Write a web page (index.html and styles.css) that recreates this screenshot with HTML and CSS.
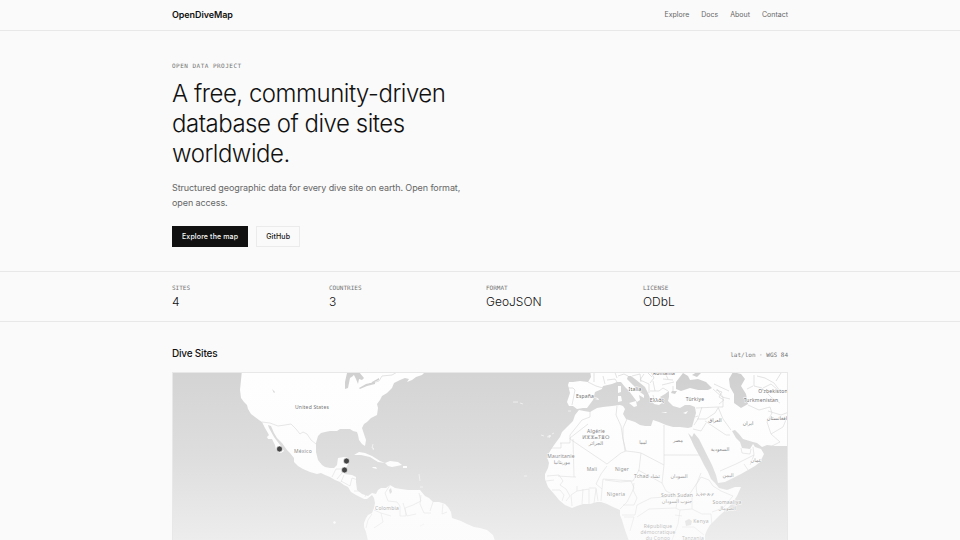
FILE: index.html
```html
<!DOCTYPE html>
<html lang="en">
<head>
<meta charset="utf-8">
<meta name="viewport" content="width=device-width, initial-scale=1">
<title>OpenDiveMap</title>
<link rel="stylesheet" href="styles.css">
</head>
<body>
<header class="site-header">
  <div class="container header-row">
    <a class="brand" href="#">OpenDiveMap</a>
    <nav class="nav">
      <a href="#map">Explore</a>
      <a href="#docs">Docs</a>
      <a href="#about">About</a>
      <a href="#contact">Contact</a>
    </nav>
  </div>
</header>
<main>
  <section class="container hero">
    <p class="eyebrow">Open data project</p>
    <h1>A free, community-driven database of dive sites worldwide.</h1>
    <p class="lead">Structured geographic data for every dive site on earth. Open format, open access.</p>
    <div class="actions">
      <a class="button button-primary" href="#map">Explore the map</a>
      <a class="button" href="#github">GitHub</a>
    </div>
  </section>
  <section class="stats">
    <dl class="container stats-grid">
      <div><dt>Sites</dt><dd>4</dd></div>
      <div><dt>Countries</dt><dd>3</dd></div>
      <div><dt>Format</dt><dd>GeoJSON</dd></div>
      <div><dt>License</dt><dd>ODbL</dd></div>
    </dl>
  </section>
  <section class="container sites" id="map">
    <div class="sites-head">
      <h2>Dive Sites</h2>
      <span class="meta">lat/lon · WGS 84</span>
    </div>
    <div class="map">
      <svg class="map-art" viewBox="173 373 614 167" role="img" aria-label="Map of dive sites">
        <defs>
          <linearGradient id="fade" x1="0" y1="0" x2="0" y2="1">
            <stop offset="0" stop-color="#fafafa" stop-opacity="0"/>
            <stop offset="0.5" stop-color="#fafafa" stop-opacity="0.25"/>
            <stop offset="1" stop-color="#fafafa" stop-opacity="0.66"/>
          </linearGradient>
        </defs>
        <rect class="sea" x="172" y="372" width="617" height="169"/>
        <!-- Americas -->
        <path class="land" d="M242 370L240 390 241 398 244 402 247 405 248 409 251 414 255 417 259 420 262 422 265 428 269 435 267 437 268 439 272 439 275 445 276 450 281 453 284 451 280 445 274 437 269 428 268 425 271 426 274 433 277 438 282 443 287 450 290 453 294 458 294 462 298 466 303 469 310 472 317 474 321 473 325 475 330 477 335 480 340 482 344 485 348 487 351 492 356 495 360 497 364 499 367 499 372 495 374 498 375 503 374 508 372 513 368 515 366 518 364 523 364 527 366 532 368 541H495L493 535 487 530 480 528 474 527 467 524 461 521 452 518 451 512 448 507 445 504 439 502 433 502 429 498 425 496 420 490 415 490 408 490 401 489 395 488 390 485 386 488 381 488 378 490 376 494 372 493 368 496 362 494 357 490 356 482 356 477 352 475 344 474 346 468 349 462 348 458 344 457 338 458 337 465 334 468 330 468 325 467 322 465 318 460 316 452 316 443 318 436 321 433 325 432 330 431 337 431 340 429 345 429 350 429 353 431 357 432 358 435 359 440 362 444 365 446 366 440 364 434 362 428 364 424 367 422 371 418 377 415 378 408 377 404 380 400 382 396 387 393 392 388 394 383 400 380 405 378 409 379 407 382 412 380 416 377 422 375 427 370Z"/>
        <!-- Europe, Africa and Asia -->
        <path class="land" d="M590 370L591 377 588 382 580 381 573 382 569 382 568 385 570 393 567 402 569 406 573 406 577 409 583 408 587 408 593 400 595 392 602 389 603 386 612 384 617 382 621 382 625 387 629 391 632 395 635 399 637 402 640 400 639 395 644 398 644 395 640 392 636 388 633 385 627 379 628 376 631 376 635 379 640 383 645 387 648 393 650 398 654 404 659 405 662 403 660 397 665 394 669 391 669 397 668 401 673 406 680 408 685 405 690 405 695 407 696 413 694 420 692 427 688 428 680 427 673 427 666 425 659 422 653 420 651 426 645 426 640 425 635 422 626 419 623 414 625 409 623 406 620 405 612 406 603 407 597 408 590 412 584 411 579 410 575 415 573 421 567 427 562 432 560 437 557 441 552 448 549 453 547 457 549 463 548 468 545 474 545 479 548 487 555 495 559 500 565 505 572 508 577 506 583 504 590 504 597 502 601 502 607 504 613 507 620 510 620 515 622 520 625 530 629 541H705L705 535 707 530 710 525 720 515 727 509 733 502 737 496 741 487 735 487 727 490 719 488 715 483 711 479 708 472 704 465 700 457 694 446 688 433 692 437 694 433 699 439 703 447 708 457 712 465 716 475 718 483 725 482 733 478 741 474 748 470 755 466 760 462 764 454 761 449 755 447 753 444 750 449 742 448 740 442 736 438 732 431 735 430 739 434 743 439 753 442 757 443 762 447 767 445 775 446 789 446V370Z"/>
        <path class="land" d="M354 455l5-3 6 1 7 3 8 5 5 2-7-1-8-5-9-2zM385 463l5-2 8 1 4 3-10 2-4-1zM372 467l4 0 1 2-4-1zM403 466h4l0 2h-4zM629 403l7-2 1 5-3 1zM618 396l3 0 1 5-4 1zM618 386l3 0 0 6-3 1zM661 412l6 0-1 1zM683 413l5-2-2 3zM595 399l3-1 1 2zM333 522l2-1 1 2-2 1zM543 434l2 2M548 436l2-1 1 1-2 2zM372 446l2 3-1 1zM745 487h3"/>
        <!-- Inland waters -->
        <path class="water" d="M676 382L683 373 688 376 690 380 698 379 706 382 712 388 708 390 698 390 690 388 681 391 676 389ZM672 391l5 0-2 3-4-1zM729 379L733 372 741 374 745 379 741 386 746 394 748 404 741 408 734 403 734 394 730 387ZM692 375l5-3 4 1-4 4zM345 382l2-9 5-3 3 3-2 3-3 2-2 10-3 1zM352 371l7 1 5 6-2 2-3-1-1 5-2-5zM359 388l7-4 9-2 0 2-8 2-7 3zM372 382l7-4 0 2-7 3zM389 490l2-2 1 4-2 2zM272 389l3 3-1 1zM685 521l4-2 3 2-1 4-5 1z"/>
        <!-- Borders -->
        <g class="borders">
          <path d="M262 422l8 1 8 3 7-1 6-1 5 5 4 5 3-2 4 2 4 6 5 4M369 384l10-3 3-5 10-1 7-4M332 477l4-8 6 0 0 4-5 6M344 475l-3 7M341 481l9 5 2-8 6 2M354 491l6 0M365 497l1-3M390 485l-5 8 3 8 9 1 3 4 0 10 6 0-1-8 8-3 8-4-2-8M421 495l-1 9 4 9 7 0M433 502l-3 9M443 504l-1 10 5-2M374 510l7 3 10 3M372 514l-4 6-2 8M381 513l2 9-9 6M403 503l4 13 9-2"/>
          <path d="M568 388l5 0 2 2-3 15M588 382l8 4 7 2M590 411l0 6-8 3-12 15M560 443h10v-5l18-14M570 435v4l37 25M561 443v5h-12M573 439l1 38 2 0M607 464l14-11 5-2-3-12-2-13-5-11 1-9M625 451l-2-13 0-10 4-9M626 451l9 1 6 1M641 453l23 12v-40M664 455h37M641 453l-2 17-6 11-30-2-1 10M602 489l-6-5 5-10 6-8M547 476l12-1 4 6M546 481l8-1M574 477l-16-1M552 490l8 0 4 5-2 6M566 501l4-5-4-7-6-4 3-4M572 506l-1-11 6-4 0-5M577 491l12-2 0 15M583 489l-1 15M589 488l7 0 2 13M596 489l-2 14M602 489l-1 12M605 480l16 2 10-1 3 7-7 14-7 7M634 483l-1 7 4 8-3 7-11 0M638 470l24 13 4 8 12 6 11-2 8-12 4-10M664 465l-2 18M622 515l13 0 2-10 14-7 15-1M624 517l10 0-4 14M637 517l12-8 26-1 5 2M678 497l-2 11M680 510l12-1 0-13M680 510l-2 14-6 16M692 509l10 5 9 0 1 12M682 527l12 0 10 8M697 496l-1-11 5-8 8 3 4 6 8 5 12 5-10 12-11 4M675 515l7 1"/>
          <path d="M594 370v12M603 376l2 8M607 380l8-1 2 3M617 378l-3-8M628 376l-4-2-6 2M632 376l8-2 1 8M644 374l-4 6 9 4 0 9M650 391l9 0 4-3 5 3M650 383l4-5-4-8M655 391l-2-10M662 385l12-3M673 386l0 5M655 403l-2-8M645 370l7 7M668 379l-4-8 2-2M663 379l10 1M696 408l22-1 5 0 0-10-6-8M702 407l-4 12-4 6M697 419l9 0 9-6 3-5M718 407l5 12 8 11M705 421l21 14 4 0M693 429l8 2 5-8M741 448l1 5 8 1 1-5M753 447l1 8-4 10M754 455l-18 9-16 7M748 470l-4-6M713 389l9 8 8 2M714 384l15 7M716 390l6 2-3 5 5 3-5 4M748 405l11 5 11-3 2 6-5 9 4 12 9 8-8 4M768 411l13 4 8-3M771 434l12-7 5-12M754 375v11l8 2 10 10 8 5M757 376l8 2 9 5 6 8 9-1M747 389l6-3M763 388l8-4 7 6-4 3M781 373l-5 8M748 404l-2-2M695 417l3-1"/>
        </g>
        <g class="details">
          <path d="M513 402l5 0M520 403l3 1M373 444l-1 4M419 474l1 7M420 487h3M541 435l3 1M547 437l3-1M552 434l2-1M568 411h3M593 397l4 1M420 526l4-2M524 476l3 0"/>
        </g>
        <g class="places">
          <text x="312" y="409">United States</text>
          <text x="303" y="453">México</text>
          <text x="387" y="510">Colombia</text>
          <text x="585" y="398">España</text>
          <text x="635" y="391">Italia</text>
          <text x="657" y="402">Ελλάς</text>
          <text x="664" y="375">România</text>
          <text x="695" y="401">Türkiye</text>
          <text x="773" y="393">Oʻzbekiston</text>
          <text x="761" y="402">Turkmenistan</text>
          <text x="596" y="433">Algérie</text>
          <text x="596" y="439">ⵍⵣⵣⴰⵢⴻⵔ</text>
          <text x="596" y="445">الجزائر</text>
          <text x="643" y="444">ليبيا</text>
          <text x="678" y="442">مصر</text>
          <text x="715" y="422">العراق</text>
          <text x="748" y="425">ایران</text>
          <text x="777" y="420">افغانستان</text>
          <text x="720" y="451">السعودية</text>
          <text x="756" y="462">عمان</text>
          <text x="728" y="477">اليمن</text>
          <text x="561" y="458">Mauritanie</text>
          <text x="562" y="464">موريتانيا</text>
          <text x="592" y="471">Mali</text>
          <text x="622" y="471">Niger</text>
          <text x="647" y="478">Tchad تشاد</text>
          <text x="679" y="478">السودان</text>
          <text x="616" y="496">Nigeria</text>
          <text x="677" y="497">South Sudan</text>
          <text x="677" y="503">جنوب السودان</text>
          <text x="705" y="496">ኢትዮጵያ</text>
          <text x="727" y="504">Soomaaliya</text>
          <text x="727" y="510">الصومال</text>
          <text x="701" y="523">Kenya</text>
          <text x="658" y="528">République</text>
          <text x="658" y="534">démocratique</text>
          <text x="658" y="540">du Congo</text>
          <text x="693" y="540">Tanzania</text>
        </g>
        <rect x="172" y="372" width="617" height="169" fill="url(#fade)"/>
        <g class="markers">
          <circle cx="279.5" cy="449" r="3"/>
          <circle cx="346.5" cy="461" r="3"/>
          <circle cx="344.5" cy="470" r="3"/>
        </g>
      </svg>
    </div>
  </section>
</main>
</body>
</html>
```
FILE: styles.css
```css
* {
  box-sizing: border-box;
}

body {
  margin: 0;
  background: #fafafa;
  color: #111;
  font-family: Inter, "Liberation Sans", sans-serif;
  font-size: 9px;
}

a {
  color: inherit;
  text-decoration: none;
}

h1, h2, p, dl, dd {
  margin: 0;
}

.container {
  max-width: 640px;
  margin: 0 auto;
  padding: 0 12px;
}

.site-header {
  border-bottom: 1px solid #e8e8e8;
}

.header-row {
  display: flex;
  align-items: center;
  justify-content: space-between;
  padding-top: 9px;
  padding-bottom: 9px;
  line-height: 12px;
}

.brand {
  font-weight: 600;
  letter-spacing: -0.01em;
}

.nav {
  display: flex;
  gap: 12px;
  color: #666;
  font-size: 7px;
}

.hero {
  padding-top: 31px;
  padding-bottom: 24px;
}

.eyebrow, dt, .meta {
  color: #737373;
  font-family: "DejaVu Sans Mono", monospace;
  font-size: 6px;
  line-height: 8px;
}

.eyebrow {
  letter-spacing: 0.08em;
  text-transform: uppercase;
}

h1 {
  max-width: 320px;
  margin-top: 9px;
  font-size: 24px;
  font-weight: 300;
  letter-spacing: -0.02em;
  line-height: 30px;
}

.lead {
  max-width: 300px;
  margin-top: 11px;
  color: #666;
  letter-spacing: -0.01em;
  line-height: 15px;
}

.actions {
  display: flex;
  gap: 8px;
  margin-top: 16px;
}

.button {
  padding: 4px 9px;
  border: 1px solid #ebebeb;
  font-size: 7px;
  font-weight: 500;
  letter-spacing: 0.02em;
  line-height: 11px;
}

.button-primary {
  border-color: #111;
  background: #111;
  color: #fafafa;
}

.stats {
  border-top: 1px solid #e8e8e8;
  border-bottom: 1px solid #e8e8e8;
}

.stats-grid {
  display: grid;
  grid-template-columns: repeat(4, 1fr);
  gap: 12px;
  padding-top: 12px;
  padding-bottom: 12px;
}

dt {
  text-transform: uppercase;
}

dd {
  margin-top: 2px;
  font-size: 12px;
  font-weight: 300;
  line-height: 15px;
}

.sites {
  padding-top: 24px;
}

.sites-head {
  display: flex;
  align-items: baseline;
  justify-content: space-between;
  margin-bottom: 12px;
}

h2 {
  font-size: 10px;
  font-weight: 500;
  letter-spacing: -0.02em;
  line-height: 14px;
}

.map {
  border: 1px solid #e8e8e8;
  border-bottom: 0;
}

.map-art {
  display: block;
  width: 100%;
}

.sea {
  fill: #d4d4d4;
}

.land {
  fill: #fefefe;
}

.water {
  fill: #d0d0d0;
}

.borders {
  fill: none;
  stroke: #d0d0d0;
  stroke-width: 0.6;
  stroke-linejoin: round;
}

.details {
  fill: none;
  stroke: #ededed;
}

.places {
  fill: #666;
  stroke: #fefefe;
  stroke-width: 1;
  paint-order: stroke;
  font-family: "Noto Sans", "DejaVu Sans", sans-serif;
  font-size: 5px;
  letter-spacing: 0.04em;
  text-anchor: middle;
}

.markers {
  fill: #444;
  stroke: #fff;
  stroke-width: 0.6;
}
```
